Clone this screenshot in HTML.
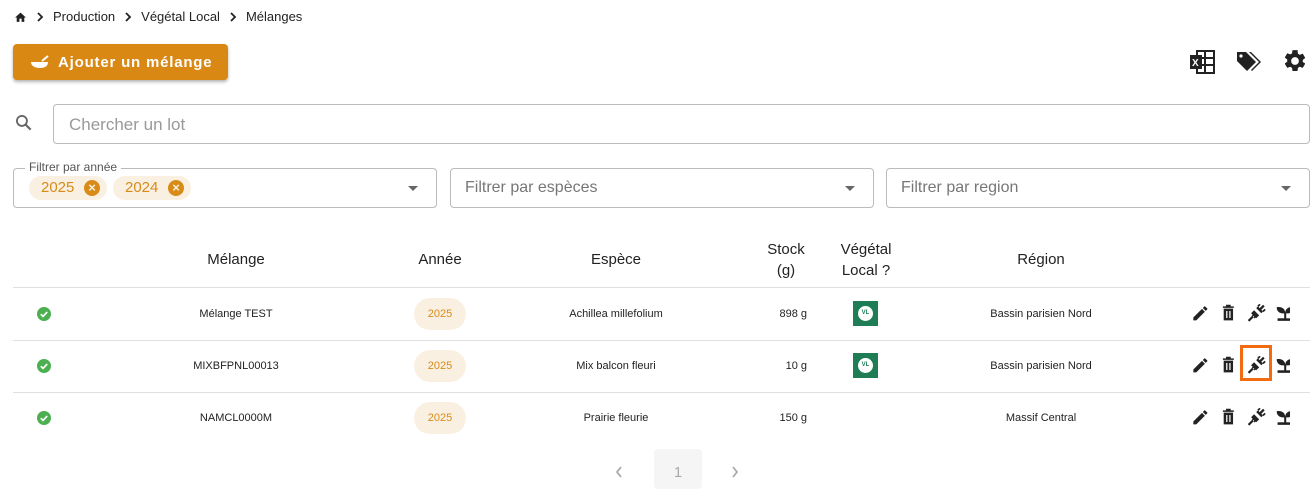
<!DOCTYPE html>
<html><head><meta charset="utf-8"><style>
*{box-sizing:border-box;margin:0;padding:0}
body{width:1314px;height:484px;overflow:hidden;background:#fff;font-family:"Liberation Sans",sans-serif;color:#222;position:relative}
.a{position:absolute}
.bc{top:9px;left:14px;font-size:13px;display:flex;align-items:center;gap:6px;color:#222}
.bc svg.c{margin:0 3px}
.btn{left:13px;top:44px;width:215px;height:36px;background:#d98913;border-radius:4px;box-shadow:0 2px 3px rgba(0,0,0,.3);color:#fff;font-weight:bold;font-size:15px;letter-spacing:.8px;display:flex;align-items:center;padding-left:17px;gap:8px}
.inp{left:53px;top:104px;width:1257px;height:40px;border:1px solid #bbb;border-radius:4px;font-size:17px;color:#999;padding:10px 15px}
.sel{top:168px;height:40px;border:1px solid #bbb;border-radius:4px;font-size:16px;color:#777;padding:10px 14px}
.arr{position:absolute;right:18px;top:17px;border-left:5px solid transparent;border-right:5px solid transparent;border-top:5px solid #666}
.chip{position:absolute;top:7px;height:24px;border-radius:12px;background:#faf0e2;color:#d98b17;font-size:15px;padding:3px 0 0 12px;width:78px}
.chip i{position:absolute;right:7px;top:4px;width:16px;height:16px;border-radius:50%;background:#d98b17;color:#faf0e2;font-style:normal;font-size:13px;line-height:16px;text-align:center;font-weight:bold}
.th{font-size:15px;color:#222;text-align:center;transform:translateX(-50%)}
.line{left:13px;width:1297px;height:1px;background:#e0e0e0}
.td{font-size:11px;text-align:center;transform:translateX(-50%);white-space:nowrap}
.ok{left:37px}
.pill{left:414px;width:52px;height:32px;border-radius:16px;background:#faf0e2;color:#d98b17;font-size:11px;text-align:center;line-height:32px}
.vl{left:853px;width:25px;height:25px;background:#1e7d55;display:flex;align-items:center;justify-content:center}
.vl b{width:15px;height:15px;border-radius:50%;background:#fff;color:#1e7d55;font-size:6px;line-height:15px;text-align:center}
</style></head><body>
<div class="a bc"><svg width="13" height="12" viewBox="0 0 24 22"><path d="M10 20v-6h4v6h5v-8h3L12 3 2 12h3v8z" fill="#222"/></svg><svg class="c" width="8" height="10" viewBox="0 0 8 10"><path d="M2 1l4 4-4 4" fill="none" stroke="#222" stroke-width="1.8"/></svg>Production<svg class="c" width="8" height="10" viewBox="0 0 8 10"><path d="M2 1l4 4-4 4" fill="none" stroke="#222" stroke-width="1.8"/></svg>Végétal Local<svg class="c" width="8" height="10" viewBox="0 0 8 10"><path d="M2 1l4 4-4 4" fill="none" stroke="#222" stroke-width="1.8"/></svg>Mélanges</div>
<div class="a btn"><svg width="20" height="16" viewBox="0 0 20 16"><path d="M1 8h17c0 4-3 6-8 6S1 12 1 8z" fill="#fff"/><path d="M12 7l6-5" stroke="#fff" stroke-width="2"/></svg>Ajouter un mélange</div>
<svg class="a" style="left:1189px;top:50px" width="27" height="24" viewBox="0 0 27 24"><rect x="8" y="1" width="17" height="22" fill="none" stroke="#222" stroke-width="2"/><path d="M8 8h17M8 15h17M16 1v22" stroke="#222" stroke-width="2"/><rect x="1" y="5" width="12" height="14" fill="#222"/><text x="3" y="16" font-size="10" fill="#fff" font-family="Liberation Sans" font-weight="bold">X</text></svg>
<svg class="a" style="left:1236px;top:50px" width="27" height="24" viewBox="0 0 27 24"><path d="M1 2h9l10 10-9 9L1 11z" fill="#222"/><circle cx="5" cy="6" r="1.6" fill="#fff"/><path d="M13 2h2l10 10-9 9-1-1 8-8z" fill="#222"/></svg>
<svg class="a" style="left:1282px;top:48px" width="26" height="26" viewBox="0 0 24 24"><path fill="#222" d="M19.14 12.94c.04-.3.06-.61.06-.94s-.02-.64-.07-.94l2.03-1.580a.5.5 0 00.12-.61l-1.92-3.32a.5.5 0 00-.59-.22l-2.39.96c-.5-.38-1.030-.7-1.62-.94l-.36-2.54A.48.48 0 0013.92 2h-3.84a.48.48 0 00-.47.41l-.36 2.54c-.59.24-1.13.57-1.62.94l-2.39-.96a.5.5 0 00-.59.22L2.74 8.47a.49.49 0 00.12.61l2.03 1.58c-.05.3-.09.63-.09.94s.02.64.07.94l-2.03 1.58a.5.5 0 00-.12.61l1.92 3.32c.12.22.37.29.59.22l2.39-.96c.5.38 1.03.7 1.62.94l.36 2.54c.05.24.24.41.48.41h3.84c.24 0 .44-.17.47-.41l.36-2.54c.59-.24 1.13-.56 1.62-.94l2.39.96c.22.08.47 0 .59-.22l1.92-3.32a.49.49 0 00-.12-.61zM12 15.6A3.6 3.6 0 1112 8.4a3.6 3.6 0 010 7.2z"/></svg>
<svg class="a" style="left:14px;top:113px" width="20" height="20" viewBox="0 0 24 24"><circle cx="9.5" cy="9.5" r="6" fill="none" stroke="#666" stroke-width="2.2"/><path d="M14 14l6 6" stroke="#666" stroke-width="2.6"/></svg>
<div class="a inp">Chercher un lot</div>
<div class="a sel" style="left:13px;width:424px"><span style="position:absolute;top:-9px;left:11px;background:#fff;padding:0 4px;font-size:12px;color:#555">Filtrer par année</span><div class="chip" style="left:15px">2025<i>×</i></div><div class="chip" style="left:99px">2024<i>×</i></div><div class="arr"></div></div>
<div class="a sel" style="left:450px;width:424px">Filtrer par espèces<div class="arr"></div></div>
<div class="a sel" style="left:886px;width:424px">Filtrer par region<div class="arr"></div></div>
<div class="a th" style="left:236px;top:251px">Mélange</div>
<div class="a th" style="left:440px;top:251px">Année</div>
<div class="a th" style="left:786px;top:239px;line-height:21px">Stock<br>(g)</div>
<div class="a th" style="left:866px;top:239px;line-height:21px">Végétal<br>Local ?</div>
<div class="a th" style="left:616px;top:251px">Espèce</div>
<div class="a th" style="left:1041px;top:251px">Région</div>
<div class="a line" style="top:287px"></div>
<div class="a line" style="top:340px"></div>
<div class="a line" style="top:392px"></div>

<svg width="0" height="0" style="position:absolute"><defs>
<g id="ck"><circle cx="7" cy="7" r="7" fill="#4caf50"/><path d="M3.8 7.2l2.2 2.2 4.2-4.4" fill="none" stroke="#fff" stroke-width="1.7"/></g>
<g id="pen"><path d="M3 17.25V21h3.75L17.81 9.94l-3.75-3.75zM20.71 7.04a1 1 0 000-1.41l-2.34-2.34a1 1 0 00-1.41 0l-1.83 1.83 3.75 3.75z" fill="#222"/></g>
<g id="bin"><path d="M6 6h12v15H6zM5 3h14v2H5zM9 1h6v2H9z" fill="#222"/><path d="M10 9v9M14 9v9" stroke="#fff" stroke-width="1.6"/></g>
<g id="plug"><path d="M3 21l5-5M21 3l-5 5" stroke="#222" stroke-width="2.6"/><path d="M6 12l6 6 3.5-3.5-6-6zM12 6l6 6 2-2-6-6z" fill="#222"/><path d="M10 13l-2.5 2.5M12 15l-2.5 2.5M14 4l2.5-2.5M20 10l2.5-2.5" stroke="#222" stroke-width="2"/></g>
<g id="spr"><path d="M12 12C12 6 7 4 2 5c0 6 5 8 10 7zM12 12c0-6 5-8 10-7 0 6-5 8-10 7z" fill="#222"/><path d="M12 11v8" stroke="#222" stroke-width="2.4"/><path d="M3 18h18v3H3z" fill="#222"/></g>
</defs></svg>
<svg class="a ok" style="top:307px" width="14" height="14"><use href="#ck"/></svg>
<svg class="a ok" style="top:359px" width="14" height="14"><use href="#ck"/></svg>
<svg class="a ok" style="top:411px" width="14" height="14"><use href="#ck"/></svg>
<div class="a td" style="left:236px;top:308px">Mélange TEST</div>
<div class="a td" style="left:236px;top:360px">MIXBFPNL00013</div>
<div class="a td" style="left:236px;top:412px">NAMCL0000M</div>
<div class="a pill" style="top:298px">2025</div><div class="a pill" style="top:350px">2025</div><div class="a pill" style="top:402px">2025</div>
<div class="a td" style="left:616px;top:308px">Achillea millefolium</div>
<div class="a td" style="left:616px;top:360px">Mix balcon fleuri</div>
<div class="a td" style="left:616px;top:412px">Prairie fleurie</div>
<div class="a td" style="left:807px;top:308px;transform:translateX(-100%)">898 g</div>
<div class="a td" style="left:807px;top:360px;transform:translateX(-100%)">10 g</div>
<div class="a td" style="left:807px;top:412px;transform:translateX(-100%)">150 g</div>
<div class="a vl" style="top:301px"><b>VL</b></div><div class="a vl" style="top:353px"><b>VL</b></div>
<div class="a td" style="left:1041px;top:308px">Bassin parisien Nord</div>
<div class="a td" style="left:1041px;top:360px">Bassin parisien Nord</div>
<div class="a td" style="left:1041px;top:412px">Massif Central</div>

<div class="a" style="left:1190px;top:304px"><svg width="100" height="20" viewBox="0 0 100 20"><g transform="translate(1,0) scale(.78)"><use href="#pen"/></g><g transform="translate(29,0) scale(.78)"><use href="#bin"/></g><g transform="translate(56,-1) scale(.85)"><use href="#plug"/></g><g transform="translate(85,-1) scale(.85)"><use href="#spr"/></g></svg></div>
<div class="a" style="left:1190px;top:356px"><svg width="100" height="20" viewBox="0 0 100 20"><g transform="translate(1,0) scale(.78)"><use href="#pen"/></g><g transform="translate(29,0) scale(.78)"><use href="#bin"/></g><g transform="translate(56,-1) scale(.85)"><use href="#plug"/></g><g transform="translate(85,-1) scale(.85)"><use href="#spr"/></g></svg></div>
<div class="a" style="left:1190px;top:408px"><svg width="100" height="20" viewBox="0 0 100 20"><g transform="translate(1,0) scale(.78)"><use href="#pen"/></g><g transform="translate(29,0) scale(.78)"><use href="#bin"/></g><g transform="translate(56,-1) scale(.85)"><use href="#plug"/></g><g transform="translate(85,-1) scale(.85)"><use href="#spr"/></g></svg></div>
<div class="a" style="left:1240px;top:345px;width:32px;height:36px;border:3px solid #f26b10"></div>

<div class="a" style="left:654px;top:449px;width:48px;height:40px;background:#f5f5f5;border-radius:4px;color:#aaa;font-size:15px;text-align:center;line-height:48px">1</div>
<svg class="a" style="left:614px;top:465px" width="10" height="14" viewBox="0 0 10 14"><path d="M7 2L3 7l4 5" fill="none" stroke="#aaa" stroke-width="1.8"/></svg>
<svg class="a" style="left:730px;top:465px" width="10" height="14" viewBox="0 0 10 14"><path d="M3 2l4 5-4 5" fill="none" stroke="#aaa" stroke-width="1.8"/></svg>
</body></html>
